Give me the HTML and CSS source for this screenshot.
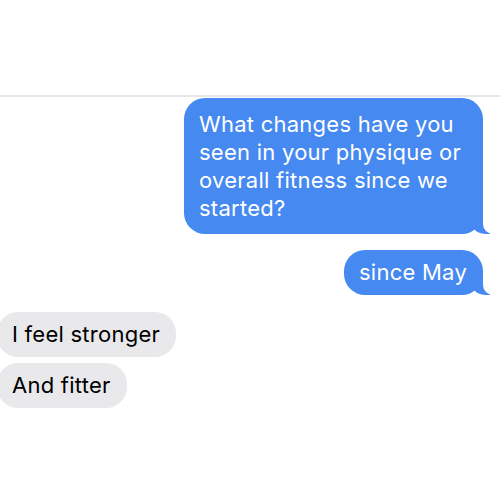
FILE: index.html
```html
<!DOCTYPE html>
<html lang="en">
<head>
<meta charset="utf-8">
<title>Messages</title>
<link rel="stylesheet" href="styles.css">
</head>
<body>
  <div class="thread">
    <div class="divider"></div>
    <div class="messages">
      <div class="bubble sent multi">What changes have you seen in your physique or overall fitness since we started?</div>
      <div class="bubble sent gap-lg">since May</div>
      <div class="bubble received gap-xl">I feel stronger</div>
      <div class="bubble received gap-sm">And fitter</div>
    </div>
  </div>
</body>
</html>
```
FILE: styles.css
```css
html, body {
  margin: 0;
  padding: 0;
  background: #ffffff;
}

body {
  width: 500px;
  height: 500px;
  overflow: hidden;
  font-family: Inter, "Liberation Sans", Arial, sans-serif;
}

.thread {
  padding-top: 95px;
}

.divider {
  height: 2px;
  background: #e6e6e6;
}

.messages {
  display: flex;
  flex-direction: column;
  padding: 1px 17px 0 0;
}

.bubble {
  position: relative;
  box-sizing: border-box;
  max-width: 299px;
  padding: 8px 16px 9px 15px;
  border-radius: 21px;
  font-size: 22px;
  line-height: 28px;
  letter-spacing: 0.25px;
}

.bubble.multi {
  padding-top: 12px;
  padding-bottom: 12px;
}

.sent {
  align-self: flex-end;
  background: #4589f1;
  color: #ffffff;
}

.sent::before {
  content: "";
  position: absolute;
  right: -7px;
  bottom: 0;
  width: 20px;
  height: 20px;
  background: #4589f1;
  border-bottom-left-radius: 15px;
}

.sent::after {
  content: "";
  position: absolute;
  right: -12px;
  bottom: 0;
  width: 12px;
  height: 22px;
  background: #ffffff;
  border-bottom-left-radius: 10px;
}

.received {
  align-self: flex-start;
  margin-left: -3px;
  background: #e9e9eb;
  color: #000000;
}

.gap-lg { margin-top: 16px; }
.gap-xl { margin-top: 17px; }
.gap-sm { margin-top: 6px; }
```
